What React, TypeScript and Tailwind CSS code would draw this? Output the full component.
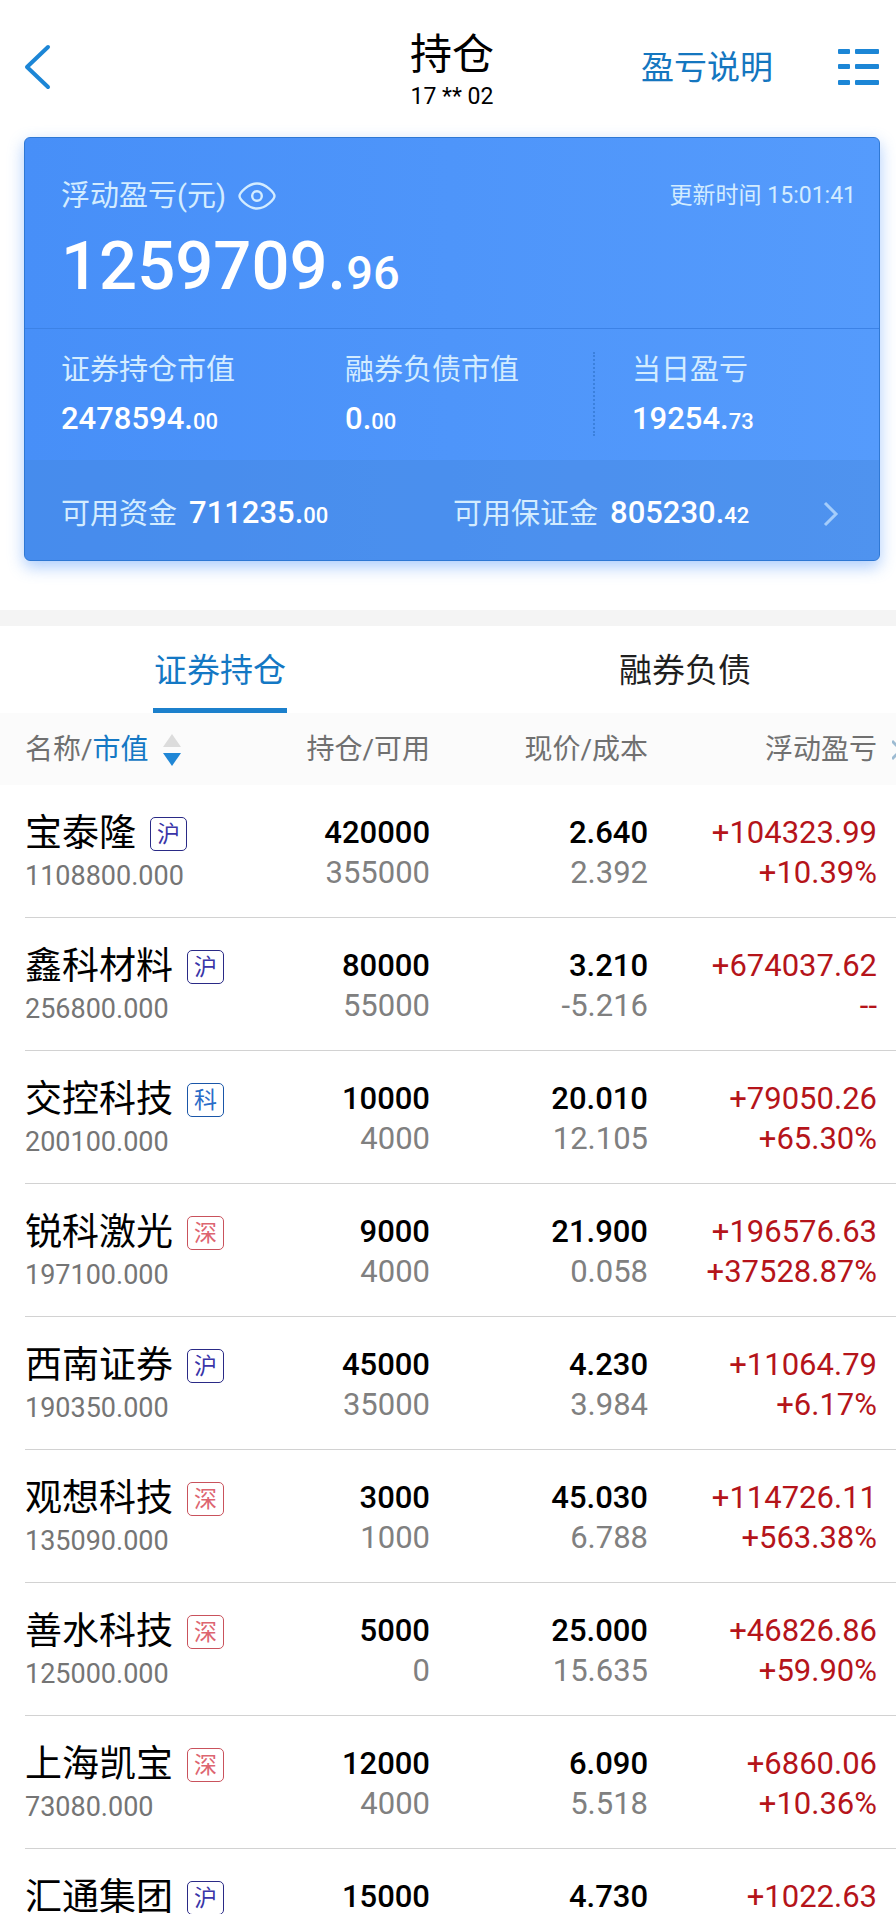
import React from 'react';

type Market = '沪' | '深' | '科';

interface Holding {
    name: string;
    market: Market;
    value: string;
    amount: string;
    available: string;
    price: string;
    cost: string;
    profit: string;
    rate: string;
}

const holdings: Holding[] = [
    { name: '宝泰隆', market: '沪', value: '1108800.000', amount: '420000', available: '355000', price: '2.640', cost: '2.392', profit: '+104323.99', rate: '+10.39%' },
    { name: '鑫科材料', market: '沪', value: '256800.000', amount: '80000', available: '55000', price: '3.210', cost: '-5.216', profit: '+674037.62', rate: '--' },
    { name: '交控科技', market: '科', value: '200100.000', amount: '10000', available: '4000', price: '20.010', cost: '12.105', profit: '+79050.26', rate: '+65.30%' },
    { name: '锐科激光', market: '深', value: '197100.000', amount: '9000', available: '4000', price: '21.900', cost: '0.058', profit: '+196576.63', rate: '+37528.87%' },
    { name: '西南证券', market: '沪', value: '190350.000', amount: '45000', available: '35000', price: '4.230', cost: '3.984', profit: '+11064.79', rate: '+6.17%' },
    { name: '观想科技', market: '深', value: '135090.000', amount: '3000', available: '1000', price: '45.030', cost: '6.788', profit: '+114726.11', rate: '+563.38%' },
    { name: '善水科技', market: '深', value: '125000.000', amount: '5000', available: '0', price: '25.000', cost: '15.635', profit: '+46826.86', rate: '+59.90%' },
    { name: '上海凯宝', market: '深', value: '73080.000', amount: '12000', available: '4000', price: '6.090', cost: '5.518', profit: '+6860.06', rate: '+10.36%' },
];

const nextHolding = { name: '汇通集团', market: '沪' as Market, amount: '15000', price: '4.730', profit: '+1022.63' };

const marketStyles: Record<Market, string> = {
    沪: 'border-[#2a2a86] text-[#3a35a8]',
    深: 'border-[#c9525c] text-[#dd6570]',
    科: 'border-[#1a56a8] text-[#2a6cc8]',
};

const Money: React.FC<{ value: string }> = ({ value }) => {
    const [whole, cents] = value.split('.');
    return (
        <span className="font-medium text-[31px] leading-9 text-white">
            {whole}.<span className="text-[22px]">{cents}</span>
        </span>
    );
};

const StockName: React.FC<{ name: string; market: Market }> = ({ name, market }) => (
    <div className="flex items-center gap-[14px]">
        <span className="whitespace-nowrap text-[37px] leading-[46px] text-black">{name}</span>
        <span className={`flex h-[34px] w-[37px] shrink-0 items-center justify-center rounded-[5px] border text-[23px] leading-none ${marketStyles[market]}`}>
            {market}
        </span>
    </div>
);

const Header: React.FC = () => (
    <header className="relative flex h-[137px] shrink-0 items-center justify-between pb-1 pl-[22px] pr-[15px]">
        <button type="button" aria-label="返回">
            <svg className="h-[50px] w-[30px]" viewBox="0 0 30 50" fill="none" stroke="#1c86d6" strokeWidth="4" strokeLinecap="round" strokeLinejoin="round">
                <path d="M26 5 5 25l21 20" />
            </svg>
        </button>
        <div className="absolute inset-x-0 top-[31px] mx-auto flex w-fit flex-col items-center pl-2">
            <h1 className="text-[42px] leading-[48px] text-black">持仓</h1>
            <span className="mt-1 text-[23px] leading-7 text-black">17 ** 02</span>
        </div>
        <div className="flex items-center gap-16">
            <a href="#explain" className="pt-[2px] text-[33px] leading-10 text-[#1476bf]">盈亏说明</a>
            <button type="button" aria-label="菜单">
                <svg className="h-10 w-11" viewBox="0 0 44 40" fill="#1c86d6">
                    <rect x="1" y="2" width="12" height="5" rx="1" />
                    <rect x="18" y="2" width="24" height="5" rx="1" />
                    <rect x="1" y="17" width="12" height="5" rx="1" />
                    <rect x="18" y="17" width="24" height="5" rx="1" />
                    <rect x="1" y="33" width="12" height="5" rx="1" />
                    <rect x="18" y="33" width="24" height="5" rx="1" />
                </svg>
            </button>
        </div>
    </header>
);

const SummaryCard: React.FC = () => (
    <section className="ml-6 mr-4 shrink-0 overflow-hidden rounded-md border border-[#2f78d4] bg-linear-to-r from-[#478ff8] to-[#559bfc] text-[#d3ecff] shadow-[0_6px_16px_rgb(71,143,248,0.45)]">
        <div className="h-[191px] border-b border-[#3c82e6] pl-9 pr-[23px] pt-10">
            <div className="flex items-center justify-between">
                <div className="flex items-center gap-3">
                    <h2 className="text-[29px] leading-9">浮动盈亏(元)</h2>
                    <button type="button" aria-label="隐藏金额">
                        <svg className="h-7 w-[38px]" viewBox="0 0 38 28" fill="none" stroke="currentColor" strokeWidth="2.4">
                            <path d="M1.5 14C1.5 11 10 1.5 19 1.5S36.5 11 36.5 14 28 26.5 19 26.5 1.5 17 1.5 14Z" />
                            <circle cx="19" cy="14" r="4.8" />
                        </svg>
                    </button>
                </div>
                <span className="text-[23px] leading-9">更新时间 15:01:41</span>
            </div>
            <p className="mt-3 font-medium text-[67px] leading-[80px] text-white">
                1259709.<span className="text-[47px]">96</span>
            </p>
        </div>
        <div className="flex h-[131px] items-center pl-9 pt-[2px]">
            <div className="flex w-[284px] flex-col gap-[13px]">
                <span className="text-[29px] leading-9">证券持仓市值</span>
                <Money value="2478594.00" />
            </div>
            <div className="flex flex-1 flex-col gap-[13px]">
                <span className="text-[29px] leading-9">融券负债市值</span>
                <Money value="0.00" />
            </div>
            <div className="mb-1 h-[84px] border-l-2 border-dotted border-[#3b80dc]" />
            <div className="flex w-[284px] flex-col gap-[13px] pl-[37px]">
                <span className="text-[29px] leading-9">当日盈亏</span>
                <Money value="19254.73" />
            </div>
        </div>
        <div className="flex h-[100px] items-center bg-[#4686dc]/40 pl-9 pr-10 pt-2">
            <div className="flex w-[392px] items-center gap-3">
                <span className="text-[29px] leading-9">可用资金</span>
                <Money value="711235.00" />
            </div>
            <div className="flex flex-1 items-center gap-3">
                <span className="text-[29px] leading-9">可用保证金</span>
                <Money value="805230.42" />
            </div>
            <button type="button" aria-label="资金详情">
                <svg className="h-7 w-4" viewBox="0 0 16 28" fill="none" stroke="#a5cdfb" strokeWidth="3">
                    <path d="m2 3 11 11L2 25" />
                </svg>
            </button>
        </div>
    </section>
);

const Tabs: React.FC = () => (
    <nav className="flex h-[87px] shrink-0 justify-between pl-[153px] pr-36">
        <button type="button" className="border-b-[5px] border-[#1c80cc] px-px pt-2 text-[33px] leading-10 text-[#1478c4]">证券持仓</button>
        <button type="button" className="border-b-[5px] border-transparent px-px pt-2 text-[33px] leading-10 text-[#1f1f1f]">融券负债</button>
    </nav>
);

const cell = 'flex h-[133px] flex-col items-end border-b border-[#d2d2d2] pt-7 text-[31px] leading-10';

const HoldingsTable: React.FC = () => (
    <table className="w-full table-fixed border-collapse">
        <thead>
            <tr className="h-[72px] bg-[#fbfbfb] text-[28px] leading-9 text-[#707070]">
                <th className="p-0 pl-[25px] pt-[2px] text-left font-normal">
                    <button type="button" className="flex items-center">
                        名称/<span className="text-[#1478c4]">市值</span>
                        <svg className="ml-[14px] h-8 w-[18px]" viewBox="0 0 18 32">
                            <path d="M9 0l9 13H0z" fill="#dcdcdc" />
                            <path d="M9 32l9-13H0z" fill="#2087d6" />
                        </svg>
                    </button>
                </th>
                <th className="w-[160px] p-0 pt-[2px] text-right font-normal">持仓/可用</th>
                <th className="w-[218px] p-0 pt-[2px] text-right font-normal">现价/成本</th>
                <th className="w-[248px] p-0 pt-[2px] font-normal">
                    <div className="flex items-center justify-end gap-[15px] overflow-hidden">
                        浮动盈亏
                        <svg className="h-6 w-1" viewBox="0 0 4 24" fill="none" stroke="#9dbbd2" strokeWidth="3">
                            <path d="m0 3 9 9-9 9" />
                        </svg>
                    </div>
                </th>
            </tr>
        </thead>
        <tbody>
            {holdings.map((item) => (
                <tr key={item.name}>
                    <td className="p-0 pl-[25px]">
                        <div className="flex h-[133px] flex-col border-b border-[#d2d2d2] pt-[26px]">
                            <StockName name={item.name} market={item.market} />
                            <span className="mt-[3px] text-[27px] leading-8 text-[#757575]">{item.value}</span>
                        </div>
                    </td>
                    <td className="p-0">
                        <div className={cell}>
                            <span className="font-medium text-black">{item.amount}</span>
                            <span className="text-[#808080]">{item.available}</span>
                        </div>
                    </td>
                    <td className="p-0">
                        <div className={cell}>
                            <span className="font-medium text-black">{item.price}</span>
                            <span className="text-[#808080]">{item.cost}</span>
                        </div>
                    </td>
                    <td className="p-0">
                        <div className={`${cell} pr-[19px] text-[#b5141a]`}>
                            <span>{item.profit}</span>
                            <span>{item.rate}</span>
                        </div>
                    </td>
                </tr>
            ))}
            <tr className="align-top text-[31px] leading-10">
                <td className="p-0 pl-[25px] pt-[26px]">
                    <StockName name={nextHolding.name} market={nextHolding.market} />
                </td>
                <td className="p-0 pt-7 text-right font-medium text-black">{nextHolding.amount}</td>
                <td className="p-0 pt-7 text-right font-medium text-black">{nextHolding.price}</td>
                <td className="p-0 pr-[19px] pt-7 text-right text-[#b5141a]">{nextHolding.profit}</td>
            </tr>
        </tbody>
    </table>
);

const App: React.FC = () => (
    <div className="flex h-screen flex-col overflow-hidden bg-white font-[Roboto,'Noto_Sans_CJK_SC',sans-serif]">
        <Header />
        <SummaryCard />
        <div className="mt-[49px] h-4 shrink-0 bg-[#f4f4f4]" />
        <Tabs />
        <main className="min-h-0 flex-1 overflow-y-auto [scrollbar-width:none]">
            <HoldingsTable />
        </main>
    </div>
);

export default App;
